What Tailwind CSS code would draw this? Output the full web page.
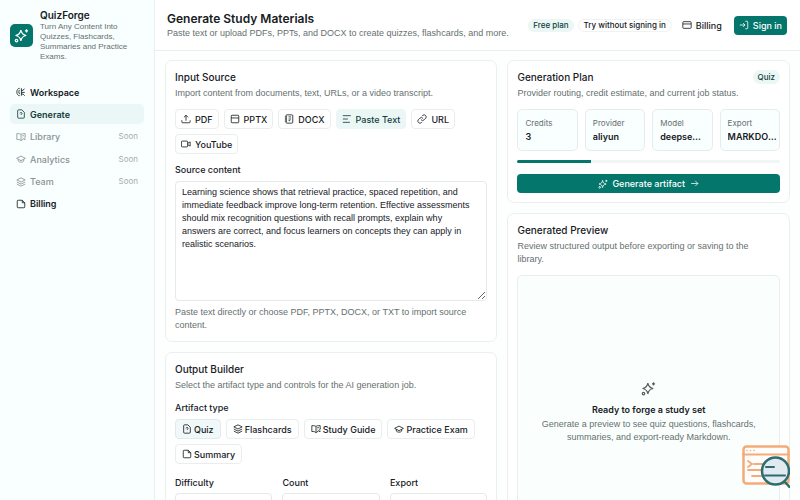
<!DOCTYPE html>
<html lang="en">
<head>
  <meta charset="UTF-8" />
  <meta name="viewport" content="width=device-width, initial-scale=1.0"/>
  <title>QuizForge - Generate Study Materials</title>
  <script src="https://cdn.jsdelivr.net/npm/@tailwindcss/browser@4"></script>
</head>
<body class="bg-[#fdfffe] min-h-screen flex font-['Inter','Liberation_Sans',sans-serif] text-[9px] leading-[13px] text-[#17201f]">

  <!-- Icon sprite -->
  <svg class="hidden" fill="none" stroke="currentColor" stroke-width="2" stroke-linecap="round" stroke-linejoin="round">
    <symbol id="sparkles" viewBox="0 0 24 24"><path d="M11 3.500c.9 5.300 3.200 7.600 8.500 8.500-5.300.9-7.600 3.200-8.500 8.500-.9-5.300-3.200-7.600-8.500-8.500 5.300-.9 7.600-3.200 8.500-8.500zM20 2v5M17.500 4.500h5"/><circle cx="4" cy="20" r="2"/></symbol>
    <symbol id="brain" viewBox="0 0 24 24"><path d="M9 3C5 3 2 7 2 12s3 9 7 9M13 3v18M9 7c-3 2-3 7 0 10M13 8h4l3-4M13 13h8M13 17h4l4 4"/></symbol>
    <symbol id="quiz" viewBox="0 0 24 24"><path d="M14 2H6a2 2 0 0 0-2 2v16a2 2 0 0 0 2 2h12a2 2 0 0 0 2-2V8zM9.500 10.500c.3-3 5-3 5 0 0 2-2.500 2-2.500 4M12 18v.1"/></symbol>
    <symbol id="book" viewBox="0 0 24 24"><path d="M12 6v15M12 6c-2-2-5-2-10-2v14c5 0 8 0 10 3 1-2 3-3 5-3M12 6c2-2 5-2 10-2v8M15 9h4M16 14l2 2 5-4M22 16v2h-3"/></symbol>
    <symbol id="cap" viewBox="0 0 24 24"><path d="M1.500 10.500 12 5l10.500 5.500L12 16zM5.500 13v4c3 3.500 10 3.500 13 0v-4"/></symbol>
    <symbol id="layers" viewBox="0 0 24 24"><path d="M12 2 2 7l10 5 10-5zM2 12l10 5 10-5M2 17l10 5 10-5"/></symbol>
    <symbol id="note" viewBox="0 0 24 24"><path d="M15 3H5a2 2 0 0 0-2 2v14a2 2 0 0 0 2 2h14a2 2 0 0 0 2-2V9zM15 3v6h6"/></symbol>
    <symbol id="card" viewBox="0 0 24 24"><rect x="2" y="4" width="20" height="16" rx="2"/><path d="M2 9.500h20"/></symbol>
    <symbol id="login" viewBox="0 0 24 24"><path d="M2 12h12M10 7.500l4.500 4.500-4.500 4.500M15 3h4a2 2 0 0 1 2 2v14a2 2 0 0 1-2 2h-4"/></symbol>
    <symbol id="upload" viewBox="0 0 24 24"><path d="M12 16V3M7 8l5-5 5 5M2 15v4a2 2 0 0 0 2 2h16a2 2 0 0 0 2-2v-4"/></symbol>
    <symbol id="panel" viewBox="0 0 24 24"><rect x="3" y="3" width="18" height="18" rx="2"/><path d="M3 9.500h18"/></symbol>
    <symbol id="doc" viewBox="0 0 24 24"><rect x="5" y="2" width="16" height="20" rx="2"/><path d="M2 7h5M2 12h5M2 17h5M11 7h6M11 12h6M11 16h4"/></symbol>
    <symbol id="lines" viewBox="0 0 24 24"><path d="M2 4h19M2 12h12M2 20h17"/></symbol>
    <symbol id="link" viewBox="0 0 24 24"><path d="M9.500 13.500a5 5 0 0 0 7.500.5l4-4a5 5 0 0 0-7-7l-2 2M14.500 10.500a5 5 0 0 0-7.500-.5l-4 4a5 5 0 0 0 7 7l2-2"/></symbol>
    <symbol id="video" viewBox="0 0 24 24"><rect x="1" y="5" width="15" height="14" rx="2"/><path d="M16 10.500l6-3.500v10l-6-3.500"/></symbol>
    <symbol id="arrow" viewBox="0 0 24 24"><path d="M3 12h18M14 5l7 7-7 7"/></symbol>
  </svg>

  <!-- Sidebar -->
  <aside class="w-[155px] shrink-0 border-r border-[#e9f0ef] bg-[#f8fffe] px-[10px] pt-2">
    <div class="flex items-center gap-[7px]">
      <div class="w-[23px] h-[23px] shrink-0 rounded-[5px] bg-[#04766b] text-white flex items-center justify-center">
        <svg class="w-[15px] h-[15px] fill-none stroke-current stroke-2"><use href="#sparkles"/></svg>
      </div>
      <div>
        <p class="text-[10px] leading-[14px] font-semibold">QuizForge</p>
        <p class="font-['Liberation_Sans',sans-serif] text-[8px] leading-[10px] text-[#66706f]">Turn Any Content Into Quizzes, Flashcards, Summaries and Practice Exams.</p>
      </div>
    </div>
    <nav class="mt-5 h-[132px] flex flex-col justify-between font-medium">
      <a href="#" class="h-5 px-[6px] rounded-[5px] flex items-center gap-1 font-semibold"><svg class="w-[10px] h-[10px] fill-none stroke-current stroke-2"><use href="#brain"/></svg>Workspace</a>
      <a href="#" class="h-5 px-[6px] rounded-[5px] flex items-center gap-1 font-semibold bg-[#eaf7f6] text-[#163c3d]"><svg class="w-[10px] h-[10px] fill-none stroke-current stroke-2"><use href="#quiz"/></svg>Generate</a>
      <a href="#" class="h-5 px-[6px] rounded-[5px] flex items-center gap-1 text-[#8b9291]"><svg class="w-[10px] h-[10px] fill-none stroke-current stroke-2"><use href="#book"/></svg>Library<span class="ml-auto text-[8px] font-normal text-[#a6adac]">Soon</span></a>
      <a href="#" class="h-5 px-[6px] rounded-[5px] flex items-center gap-1 text-[#8b9291]"><svg class="w-[10px] h-[10px] fill-none stroke-current stroke-2"><use href="#cap"/></svg>Analytics<span class="ml-auto text-[8px] font-normal text-[#a6adac]">Soon</span></a>
      <a href="#" class="h-5 px-[6px] rounded-[5px] flex items-center gap-1 text-[#8b9291]"><svg class="w-[10px] h-[10px] fill-none stroke-current stroke-2"><use href="#layers"/></svg>Team<span class="ml-auto text-[8px] font-normal text-[#a6adac]">Soon</span></a>
      <a href="#" class="h-5 px-[6px] rounded-[5px] flex items-center gap-1 font-semibold"><svg class="w-[10px] h-[10px] fill-none stroke-current stroke-2"><use href="#note"/></svg>Billing</a>
    </nav>
  </aside>

  <div class="flex-1 min-w-0">
    <!-- Top bar -->
    <header class="h-[51px] border-b border-[#e9efee] bg-white pl-3 pr-[13px] flex items-center justify-between">
      <div>
        <h1 class="text-[12px] leading-4 font-semibold">Generate Study Materials</h1>
        <p class="font-['Liberation_Sans',sans-serif] text-[#66706f]">Paste text or upload PDFs, PPTs, and DOCX to create quizzes, flashcards, and more.</p>
      </div>
      <div class="flex items-center gap-1 font-medium whitespace-nowrap">
        <span class="rounded-full bg-[#eaf7f5] px-[5px] text-[8px] text-[#163c3d]">Free plan</span>
        <span class="rounded-full border border-[#eef2f1] px-[5px] text-[8px] leading-[11px]">Try without signing in</span>
        <a href="#" class="h-5 pl-[6px] pr-2 flex items-center gap-1"><svg class="w-[10px] h-[10px] fill-none stroke-current stroke-2"><use href="#card"/></svg>Billing</a>
        <button class="h-[19px] px-[5px] rounded-[4px] bg-[#04766b] text-white flex items-center gap-1"><svg class="w-[10px] h-[10px] fill-none stroke-current stroke-2"><use href="#login"/></svg>Sign in</button>
      </div>
    </header>

    <main class="p-[10px] pt-[9px] grid grid-cols-[minmax(0,1fr)_minmax(0,0.85fr)] gap-[10px] items-start">
      <div class="flex flex-col gap-[10px]">
        <!-- Input source -->
        <section class="rounded-[7px] border border-[#ebf0ef] bg-white p-[9px]">
          <h2 class="text-[10px] leading-[14px] font-medium">Input Source</h2>
          <p class="mt-[3px] font-['Liberation_Sans',sans-serif] text-[#66706f]">Import content from documents, text, URLs, or a video transcript.</p>
          <div class="mt-[9px] flex flex-wrap gap-[5px] font-medium">
            <button class="h-5 px-[5px] rounded-[4px] border border-[#e8eeed] flex items-center gap-1"><svg class="w-[10px] h-[10px] fill-none stroke-current stroke-2"><use href="#upload"/></svg>PDF</button>
            <button class="h-5 px-[5px] rounded-[4px] border border-[#e8eeed] flex items-center gap-1"><svg class="w-[10px] h-[10px] fill-none stroke-current stroke-2"><use href="#panel"/></svg>PPTX</button>
            <button class="h-5 px-[5px] rounded-[4px] border border-[#e8eeed] flex items-center gap-1"><svg class="w-[10px] h-[10px] fill-none stroke-current stroke-2"><use href="#doc"/></svg>DOCX</button>
            <button class="h-5 px-[5px] rounded-[4px] border border-[#eaf7f5] bg-[#eaf7f5] text-[#163c3d] flex items-center gap-1"><svg class="w-[10px] h-[10px] fill-none stroke-current stroke-2"><use href="#lines"/></svg>Paste Text</button>
            <button class="h-5 px-[5px] rounded-[4px] border border-[#e8eeed] flex items-center gap-1"><svg class="w-[10px] h-[10px] fill-none stroke-current stroke-2"><use href="#link"/></svg>URL</button>
            <button class="h-5 px-[5px] rounded-[4px] border border-[#e8eeed] flex items-center gap-1"><svg class="w-[10px] h-[10px] fill-none stroke-current stroke-2"><use href="#video"/></svg>YouTube</button>
          </div>
          <label for="source" class="mt-[9px] block font-medium">Source content</label>
          <textarea id="source" class="mt-[5px] block w-full h-[120px] rounded-[4px] border border-[#e3eae9] pl-[6px] pr-3 py-[4px] font-['Liberation_Sans',sans-serif] leading-[13px] resize-y">Learning science shows that retrieval practice, spaced repetition, and immediate feedback improve long-term retention. Effective assessments should mix recognition questions with recall prompts, explain why answers are correct, and focus learners on concepts they can apply in realistic scenarios.</textarea>
          <p class="mt-[5px] font-['Liberation_Sans',sans-serif] text-[#66706f]">Paste text directly or choose PDF, PPTX, DOCX, or TXT to import source content.</p>
        </section>

        <!-- Output builder -->
        <section class="rounded-[7px] border border-[#ebf0ef] bg-white p-[9px]">
          <h2 class="text-[10px] leading-[14px] font-medium">Output Builder</h2>
          <p class="mt-[3px] font-['Liberation_Sans',sans-serif] text-[#66706f]">Select the artifact type and controls for the AI generation job.</p>
          <p class="mt-[9px] font-medium">Artifact type</p>
          <div class="mt-[5px] flex flex-wrap gap-[5px] font-medium">
            <button class="h-5 px-[6px] rounded-[4px] border border-[#dfeaea] bg-[#f0f8f9] flex items-center gap-[2px]"><svg class="w-[10px] h-[10px] fill-none stroke-current stroke-2"><use href="#quiz"/></svg>Quiz</button>
            <button class="h-5 px-[6px] rounded-[4px] border border-[#e8eeed] flex items-center gap-[2px]"><svg class="w-[10px] h-[10px] fill-none stroke-current stroke-2"><use href="#layers"/></svg>Flashcards</button>
            <button class="h-5 px-[6px] rounded-[4px] border border-[#e8eeed] flex items-center gap-[2px]"><svg class="w-[10px] h-[10px] fill-none stroke-current stroke-2"><use href="#book"/></svg>Study Guide</button>
            <button class="h-5 px-[6px] rounded-[4px] border border-[#e8eeed] flex items-center gap-[2px]"><svg class="w-[10px] h-[10px] fill-none stroke-current stroke-2"><use href="#cap"/></svg>Practice Exam</button>
            <button class="h-5 px-[6px] rounded-[4px] border border-[#e8eeed] flex items-center gap-[2px]"><svg class="w-[10px] h-[10px] fill-none stroke-current stroke-2"><use href="#note"/></svg>Summary</button>
          </div>
          <div class="mt-3 grid grid-cols-3 gap-[10px] font-medium">
            <div>
              <label for="difficulty">Difficulty</label>
              <select id="difficulty" class="mt-1 block w-full h-5 rounded-[4px] border border-[#e3eae9] px-1 font-normal"><option>Medium</option></select>
            </div>
            <div>
              <label for="count">Count</label>
              <input id="count" type="number" value="10" class="mt-1 block w-full h-5 rounded-[4px] border border-[#e3eae9] px-[6px] font-normal"/>
            </div>
            <div>
              <label for="export">Export</label>
              <select id="export" class="mt-1 block w-full h-5 rounded-[4px] border border-[#e3eae9] px-1 font-normal"><option>Markdown</option></select>
            </div>
          </div>
        </section>
      </div>

      <div class="flex flex-col gap-[10px]">
        <!-- Generation plan -->
        <section class="rounded-[7px] border border-[#ebf0ef] bg-white p-[9px]">
          <div class="flex justify-between">
            <h2 class="text-[10px] leading-[14px] font-medium">Generation Plan</h2>
            <span class="rounded-full bg-[#eaf7f5] px-[5px] text-[8px] leading-[14px] font-medium text-[#163c3d]">Quiz</span>
          </div>
          <p class="mt-[3px] font-['Liberation_Sans',sans-serif] text-[#66706f]">Provider routing, credit estimate, and current job status.</p>
          <dl class="mt-[9px] grid grid-cols-4 gap-[7px]">
            <div class="rounded-[5px] border border-[#e5edec] bg-[#f9fefe] px-[7px] py-[6px]">
              <dt class="text-[8px] leading-[14px] text-[#66706f]">Credits</dt>
              <dd class="leading-[14px] font-semibold truncate">3</dd>
            </div>
            <div class="rounded-[5px] border border-[#e5edec] bg-[#f9fefe] px-[7px] py-[6px]">
              <dt class="text-[8px] leading-[14px] text-[#66706f]">Provider</dt>
              <dd class="leading-[14px] font-semibold truncate">aliyun</dd>
            </div>
            <div class="rounded-[5px] border border-[#e5edec] bg-[#f9fefe] px-[7px] py-[6px]">
              <dt class="text-[8px] leading-[14px] text-[#66706f]">Model</dt>
              <dd class="leading-[14px] font-semibold truncate">deepseek-chat</dd>
            </div>
            <div class="rounded-[5px] border border-[#e5edec] bg-[#f9fefe] pl-[7px] py-[6px]">
              <dt class="text-[8px] leading-[14px] text-[#66706f]">Export</dt>
              <dd class="leading-[14px] font-semibold truncate">MARKDOWN</dd>
            </div>
          </dl>
          <div class="mt-[9px] h-[3px] rounded-full bg-[#eff7f6] overflow-hidden">
            <div class="h-full bg-[#04766b]" style="width: 28%"></div>
          </div>
          <button class="mt-[11px] w-full h-[19px] rounded-[4px] bg-[#04766b] text-white font-medium flex items-center justify-center gap-1"><svg class="w-[10px] h-[10px] fill-none stroke-current stroke-2"><use href="#sparkles"/></svg>Generate artifact<svg class="ml-px w-[9px] h-[9px] fill-none stroke-current stroke-2"><use href="#arrow"/></svg></button>
        </section>

        <!-- Preview -->
        <section class="rounded-[7px] border border-[#ebf0ef] bg-white p-[9px]">
          <h2 class="text-[10px] leading-[14px] font-medium">Generated Preview</h2>
          <p class="mt-[3px] pr-4 font-['Liberation_Sans',sans-serif] text-[#66706f]">Review structured output before exporting or saving to the library.</p>
          <div class="mt-[9px] min-h-[275px] rounded-[5px] border border-[#e8eeed] bg-[#fafffe] px-4 flex flex-col items-center justify-center text-center">
            <svg class="w-[15px] h-[15px] text-[#56605f] fill-none stroke-current stroke-2"><use href="#sparkles"/></svg>
            <h3 class="mt-[7px] font-semibold">Ready to forge a study set</h3>
            <p class="mt-[2px] font-['Liberation_Sans',sans-serif] text-[#66706f]">Generate a preview to see quiz questions, flashcards, summaries, and export-ready Markdown.</p>
          </div>
        </section>
      </div>
    </main>
  </div>

  <!-- Floating inspector button -->
  <button aria-label="Inspect" class="fixed right-[10px] bottom-3 w-12 h-[43px]">
    <svg class="w-12 h-[43px]" viewBox="0 0 48 43" fill="none" stroke-linecap="round">
      <rect x="1.500" y="1.500" width="45" height="37" rx="3" fill="#fffdfb" stroke="#f3ac78" stroke-width="2.500"/>
      <path d="M1 9.500h46" stroke="#f3ac78" stroke-width="2"/>
      <path d="M5 5.500h.1M8.500 5.500h.1M12 5.500h.1" stroke="#f3ac78" stroke-width="1.500"/>
      <path d="M6 16l4 3-4 3M12 19h9M6 25h14M10 31h12" stroke="#f3ac78" stroke-width="1.800"/>
      <circle cx="33.500" cy="26" r="13.500" fill="#e1e9f1" stroke="#2d6d6f" stroke-width="2.500"/>
      <path d="M24 22h8M23 30.500h20" stroke="#2d6d6f" stroke-width="2"/>
      <path d="M43 37l4.500 5" stroke="#2d6d6f" stroke-width="2.500"/>
    </svg>
  </button>
</body>
</html>
